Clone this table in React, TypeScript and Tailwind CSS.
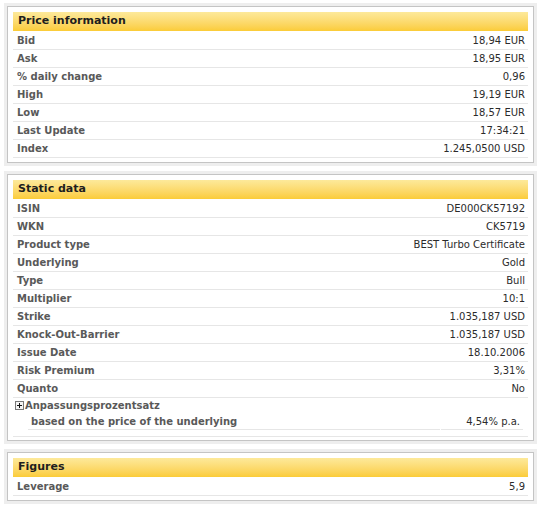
import React from "react";

type Row = [string, string];

const priceRows: Row[] = [
  ["Bid", "18,94 EUR"],
  ["Ask", "18,95 EUR"],
  ["% daily change", "0,96"],
  ["High", "19,19 EUR"],
  ["Low", "18,57 EUR"],
  ["Last Update", "17:34:21"],
  ["Index", "1.245,0500 USD"],
];

const staticRows: Row[] = [
  ["ISIN", "DE000CK57192"],
  ["WKN", "CK5719"],
  ["Product type", "BEST Turbo Certificate"],
  ["Underlying", "Gold"],
  ["Type", "Bull"],
  ["Multiplier", "10:1"],
  ["Strike", "1.035,187 USD"],
  ["Knock-Out-Barrier", "1.035,187 USD"],
  ["Issue Date", "18.10.2006"],
  ["Risk Premium", "3,31%"],
  ["Quanto", "No"],
];

function Panel({
  title,
  bottom = "pb-[4px]",
  children,
}: {
  title: string;
  bottom?: string;
  children: React.ReactNode;
}) {
  return (
    <div className="mx-[4px] border-[3px] border-[#eeeeee]">
      <div className={`border border-[#c4c4c4] bg-white px-[5px] pt-[5px] ${bottom}`}>
        <div className="h-[19px] mb-[1px] flex items-center pl-[5px] bg-gradient-to-b from-[#fde99a] to-[#fbcc36] text-[11px] font-bold text-[#1e1e1e]">
          {title}
        </div>
        {children}
      </div>
    </div>
  );
}

function DataRow({ label, value }: { label: string; value: string }) {
  return (
    <div className="h-[18px] flex items-center justify-between border-b border-[#e6e6e6] pl-[4px] pr-[3px]">
      <span className="text-[10px] font-bold text-[#595959]">{label}</span>
      <span className="text-[10px] text-[#2b2b2b]">{value}</span>
    </div>
  );
}

export default function App() {
  return (
    <div className="w-[541px] h-[508px] bg-white pt-[3px] flex flex-col gap-[5px] font-['DejaVu_Sans',sans-serif] overflow-hidden">
      <Panel title="Price information">
        {priceRows.map(([l, v]) => (
          <DataRow key={l} label={l} value={v} />
        ))}
      </Panel>

      <Panel title="Static data" bottom="pb-[3px]">
        {staticRows.map(([l, v]) => (
          <DataRow key={l} label={l} value={v} />
        ))}
        {/* Anpassungsprozentsatz block */}
        <div className="border-b border-[#e6e6e6] pb-[6px]">
          <div className="h-[15px] flex items-center pl-[2px] gap-[1px]">
            <span className="w-[9px] h-[9px] border border-[#777] flex items-center justify-center bg-[#f4f4f4]">
              <svg width="7" height="7" viewBox="0 0 7 7">
                <path d="M1 3.5h5M3.5 1v5" stroke="#111" strokeWidth="1" />
              </svg>
            </span>
            <span className="text-[10px] font-bold text-[#595959]">Anpassungsprozentsatz</span>
          </div>
          <div className="ml-[15px] mr-[5px] flex gap-[1px]">
            <div className="flex-1 h-[17px] flex items-center border-b border-[#e6e6e6] pl-[3px]">
              <span className="text-[10px] font-bold text-[#595959]">based on the price of the underlying</span>
            </div>
            <div className="w-[82px] h-[17px] flex items-center justify-end border-b border-[#e6e6e6] pr-[3px]">
              <span className="text-[10px] text-[#2b2b2b]">4,54% p.a.</span>
            </div>
          </div>
        </div>
      </Panel>

      <Panel title="Figures">
        <DataRow label="Leverage" value="5,9" />
      </Panel>
    </div>
  );
}
